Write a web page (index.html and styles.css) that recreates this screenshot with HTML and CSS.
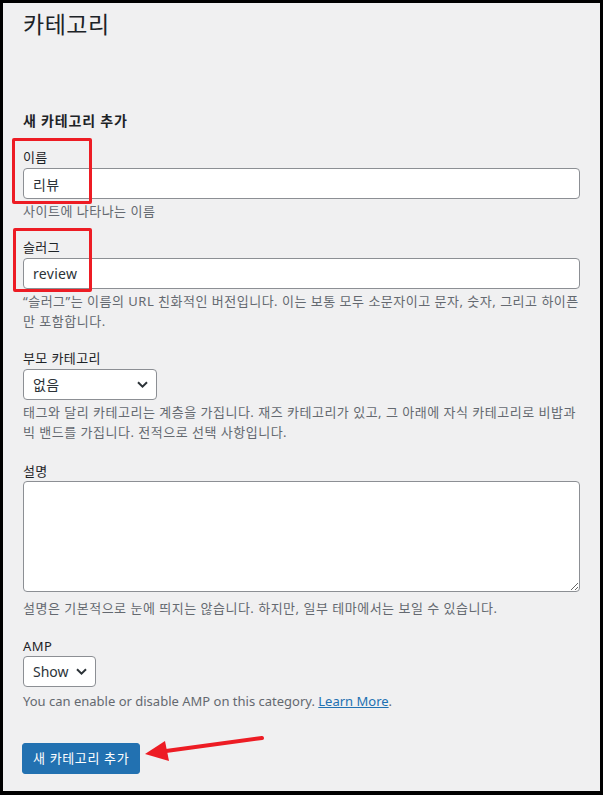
FILE: index.html
```html
<!DOCTYPE html>
<html lang="ko">
<head>
<meta charset="utf-8">
<title>카테고리</title>
<link rel="stylesheet" href="styles.css">
</head>
<body>
<div class="page">
  <h1 class="title">카테고리</h1>
  <h2 class="form-heading">새 카테고리 추가</h2>

  <div class="field field-marked">
    <label class="label" for="tag-name">이름</label>
    <input class="text-input" id="tag-name" type="text" value="리뷰">
    <p class="desc">사이트에 나타나는 이름</p>
    <span class="mark mark-name"></span>
  </div>

  <div class="field field-marked field-slug">
    <label class="label" for="tag-slug">슬러그</label>
    <input class="text-input" id="tag-slug" type="text" value="review">
    <p class="desc">“슬러그”는 이름의 URL 친화적인 버전입니다. 이는 보통 모두 소문자이고 문자, 숫자, 그리고 하이픈만 포함합니다.</p>
    <span class="mark mark-slug"></span>
  </div>

  <div class="field field-parent">
    <label class="label">부모 카테고리</label>
    <div class="select select-parent">
      <span class="select-value">없음</span>
      <svg class="chev" width="11" height="7" viewBox="0 0 11 7"><path d="M1 1.2 L5.5 5.6 L10 1.2" fill="none" stroke="#2c3338" stroke-width="2"/></svg>
    </div>
    <p class="desc">태그와 달리 카테고리는 계층을 가집니다. 재즈 카테고리가 있고, 그 아래에 자식 카테고리로 비밥과 빅 밴드를 가집니다. 전적으로 선택 사항입니다.</p>
  </div>

  <div class="field field-description">
    <label class="label label-tight" for="tag-desc">설명</label>
    <textarea class="textarea" id="tag-desc"></textarea>
    <p class="desc desc-after-textarea">설명은 기본적으로 눈에 띄지는 않습니다. 하지만, 일부 테마에서는 보일 수 있습니다.</p>
  </div>

  <div class="field">
    <label class="label label-tight">AMP</label>
    <div class="select select-amp">
      <span class="select-value">Show</span>
      <svg class="chev" width="11" height="7" viewBox="0 0 11 7"><path d="M1 1.2 L5.5 5.6 L10 1.2" fill="none" stroke="#2c3338" stroke-width="2"/></svg>
    </div>
    <p class="desc desc-amp">You can enable or disable AMP on this category. <a class="link" href="#">Learn More</a>.</p>
  </div>

  <div class="submit-row">
    <button class="button-primary" type="button">새 카테고리 추가</button>
    <svg class="arrow" width="130" height="30" viewBox="0 0 130 30">
      <line x1="126" y1="3" x2="30" y2="16" stroke="#ed1c24" stroke-width="4" stroke-linecap="round"/>
      <polygon points="9,19 29,6 33,26" fill="#ed1c24"/>
    </svg>
  </div>
</div>
</body>
</html>
```

FILE: styles.css
```css
html, body {
  height: 100%;
}
body {
  margin: 0;
  box-sizing: border-box;
  background: #f0f0f1;
  border-style: solid;
  border-color: #000;
  border-width: 3px 3px 4px 3px;
  overflow: hidden;
  font-family: "Noto Sans", "Noto Sans CJK KR", sans-serif;
  color: #1d2327;
  font-size: 13px;
}
.page {
  padding: 5px 20px 0 20px;
}
.title {
  margin: 0;
  font-size: 23px;
  font-weight: 400;
  line-height: 32px;
  letter-spacing: 0.5px;
  color: #1d2327;
}
.form-heading {
  margin: 71px 0 16px 0;
  font-size: 14px;
  font-weight: 700;
  line-height: 20px;
  letter-spacing: 0.8px;
  color: #1d2327;
}
.field {
  margin-bottom: 16px;
}
.field-slug {
  margin-bottom: 17px;
}
.field-parent {
  margin-bottom: 19px;
}
.field-description {
  margin-bottom: 18px;
}
.field-marked {
  position: relative;
}
.label {
  display: block;
  font-size: 13px;
  line-height: 20px;
  margin-bottom: 1px;
  letter-spacing: 0.4px;
  color: #1d2327;
}
.label-tight {
  margin-bottom: 0;
}
.text-input {
  display: block;
  box-sizing: border-box;
  width: 100%;
  height: 31px;
  margin: 0;
  padding: 0 9px;
  border: 1px solid #8c8f94;
  border-radius: 4px;
  background: #fff;
  font-family: "Noto Sans", "Noto Sans CJK KR", sans-serif;
  font-size: 14px;
  letter-spacing: 0.3px;
  color: #2c3338;
  outline: none;
}
.desc {
  margin: 2px 0 0 0;
  font-size: 13px;
  line-height: 20px;
  color: #646970;
  letter-spacing: 0.5px;
}
.desc-after-textarea {
  margin-top: 6px;
}
.desc-amp {
  margin-top: 4px;
  letter-spacing: 0;
}
.select {
  box-sizing: border-box;
  height: 31px;
  display: flex;
  align-items: center;
  justify-content: space-between;
  border: 1px solid #8c8f94;
  border-radius: 4px;
  background: #fff;
  color: #2c3338;
  font-size: 14px;
}
.select-parent {
  width: 134px;
  padding: 0 8px 0 9px;
  letter-spacing: 0.4px;
}
.select-amp {
  width: 73px;
  padding: 0 8px 0 9px;
}
.select-value {
  line-height: 20px;
}
.chev {
  display: block;
}
.textarea {
  display: block;
  box-sizing: border-box;
  width: 100%;
  height: 111px;
  margin: 0;
  border: 1px solid #8c8f94;
  border-radius: 4px;
  background: #fff;
  resize: vertical;
  font-family: "Noto Sans", "Noto Sans CJK KR", sans-serif;
  font-size: 14px;
  outline: none;
}
.link {
  color: #2271b1;
  text-decoration: underline;
}
.submit-row {
  position: relative;
  margin-top: 32px;
}
.button-primary {
  display: inline-block;
  box-sizing: border-box;
  height: 31px;
  padding: 0 10px;
  margin-left: -1px;
  border: 1px solid #2271b1;
  border-radius: 3px;
  background: #2271b1;
  color: #fff;
  font: inherit;
  font-size: 13px;
  line-height: 29px;
  letter-spacing: 0.65px;
  cursor: pointer;
}
.mark {
  position: absolute;
  border: 3px solid #ed1c24;
  border-radius: 2px;
  pointer-events: none;
}
.mark-name {
  left: -11px;
  top: -9px;
  width: 74px;
  height: 60px;
}
.mark-slug {
  left: -10px;
  top: -9px;
  width: 73px;
  height: 58px;
}
.arrow {
  position: absolute;
  left: 113px;
  top: -8px;
}
```
